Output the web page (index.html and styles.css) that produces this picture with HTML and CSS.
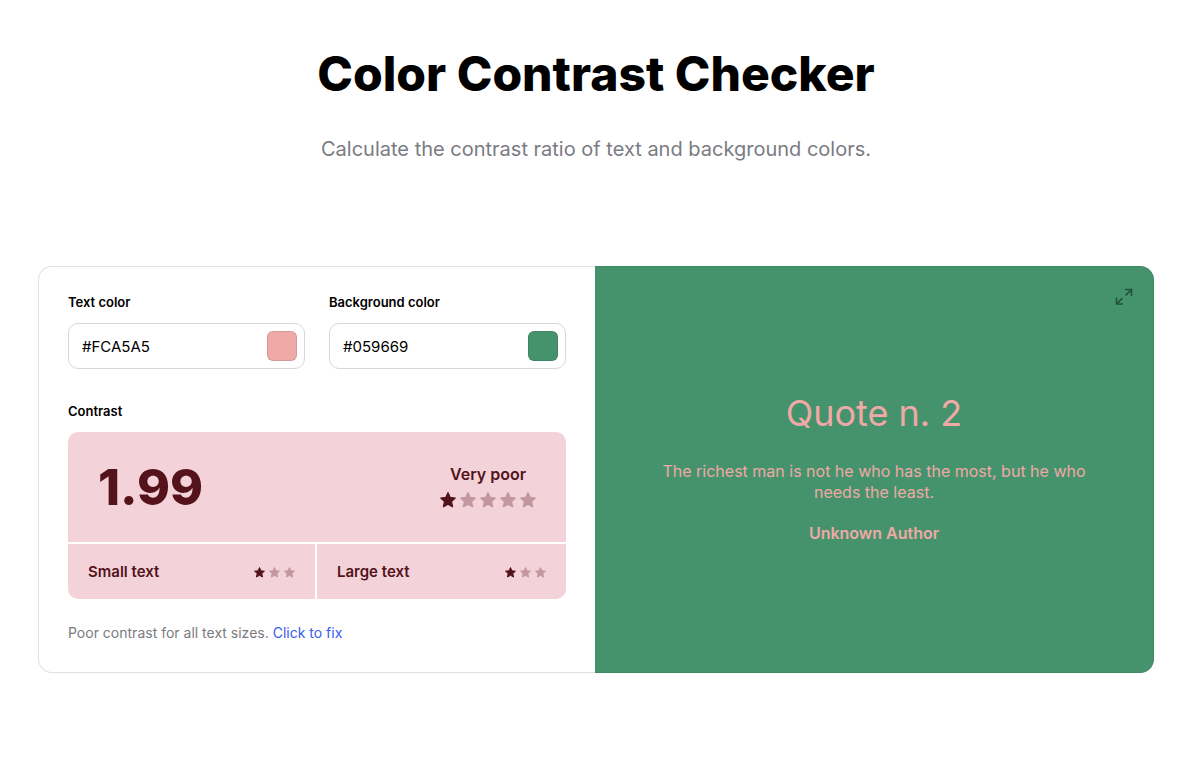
FILE: index.html
```html
<!DOCTYPE html>
<html lang="en">
<head>
<meta charset="utf-8">
<meta name="viewport" content="width=device-width, initial-scale=1">
<title>Color Contrast Checker</title>
<link rel="stylesheet" href="styles.css">
</head>
<body>
<svg class="sprite" aria-hidden="true">
  <symbol id="star" viewBox="0 0 16 16">
    <path d="M8 .8 10.1 5.5 15.2 6.1 11.4 9.5 12.5 14.6 8 12.1 3.5 14.6 4.6 9.5 .8 6.1 5.9 5.5Z" fill="currentColor" stroke="currentColor" stroke-width="1.4" stroke-linejoin="round"/>
  </symbol>
</svg>
<main class="page">
  <header class="intro">
    <h1 class="title">Color Contrast Checker</h1>
    <p class="subtitle">Calculate the contrast ratio of text and background colors.</p>
  </header>
  <section class="checker">
    <form class="controls">
      <div class="fields">
        <div class="field">
          <label class="label" for="text-color">Text color</label>
          <div class="color-input">
            <input class="color-value" id="text-color" type="text" value="#FCA5A5">
            <button class="swatch swatch-text" type="button" aria-label="Pick text color"></button>
          </div>
        </div>
        <div class="field">
          <label class="label" for="background-color">Background color</label>
          <div class="color-input">
            <input class="color-value" id="background-color" type="text" value="#059669">
            <button class="swatch swatch-background" type="button" aria-label="Pick background color"></button>
          </div>
        </div>
      </div>
      <h2 class="label contrast-label">Contrast</h2>
      <div class="results">
        <div class="overall">
          <strong class="ratio">1.99</strong>
          <div class="verdict">
            <span class="verdict-text">Very poor</span>
            <div class="stars">
              <svg class="star"><use href="#star"/></svg>
              <svg class="star star-off"><use href="#star"/></svg>
              <svg class="star star-off"><use href="#star"/></svg>
              <svg class="star star-off"><use href="#star"/></svg>
              <svg class="star star-off"><use href="#star"/></svg>
            </div>
          </div>
        </div>
        <div class="size-result">
          <span>Small text</span>
          <div class="stars stars-small">
            <svg class="star"><use href="#star"/></svg>
            <svg class="star star-off"><use href="#star"/></svg>
            <svg class="star star-off"><use href="#star"/></svg>
          </div>
        </div>
        <div class="size-result">
          <span>Large text</span>
          <div class="stars stars-small">
            <svg class="star"><use href="#star"/></svg>
            <svg class="star star-off"><use href="#star"/></svg>
            <svg class="star star-off"><use href="#star"/></svg>
          </div>
        </div>
      </div>
      <p class="note">Poor contrast for all text sizes. <a class="fix" href="#fix">Click to fix</a></p>
    </form>
    <article class="preview">
      <button class="expand" type="button" aria-label="Expand preview">
        <svg class="expand-icon" viewBox="0 0 18 18" fill="none" stroke="currentColor" stroke-width="1.6">
          <path d="M10 1.5H16.5V8M16.5 1.5 10.6 7.4M1.5 9.5V16H8M1.5 16 7.4 10.1"/>
        </svg>
      </button>
      <h2 class="quote-title">Quote n. 2</h2>
      <p class="quote">The richest man is not he who has the most, but he who needs the least.</p>
      <p class="author">Unknown Author</p>
    </article>
  </section>
</main>
</body>
</html>
```
FILE: styles.css
```css
* {
  box-sizing: border-box;
}

body {
  margin: 0;
  background: #fff;
  color: #000;
  font-family: Inter, "Liberation Sans", sans-serif;
}

h1, h2, p {
  margin: 0;
}

button {
  padding: 0;
  border: 0;
  background: none;
  cursor: pointer;
}

.sprite {
  display: none;
}

.page {
  padding: 44px 38px 40px;
}

.intro {
  margin-bottom: 102px;
  text-align: center;
}

.title {
  font-size: 48px;
  line-height: 60px;
  font-weight: 800;
}

.subtitle {
  margin-top: 30px;
  font-size: 20px;
  line-height: 30px;
  color: #7b7b83;
}

.checker {
  display: grid;
  grid-template-columns: minmax(0, 557fr) minmax(0, 559fr);
}

.controls {
  padding: 25px 29px 29px;
  border: 1px solid #e1e1e3;
  border-right: 0;
  border-radius: 14px 0 0 14px;
}

.fields {
  display: grid;
  grid-template-columns: minmax(0, 1fr) minmax(0, 1fr);
  gap: 24px;
}

.label {
  display: block;
  margin-bottom: 11px;
  font-size: 13px;
  line-height: 20px;
  font-weight: 600;
}

.color-input {
  display: flex;
  align-items: center;
  height: 46px;
  padding: 0 7px 0 13px;
  border: 1px solid #d8d8da;
  border-radius: 10px;
}

.color-value {
  flex: 1;
  min-width: 0;
  padding: 2px 0 0;
  border: 0;
  outline: 0;
  background: none;
  color: #000;
  font: 15px/20px Inter, "Liberation Sans", sans-serif;
}

.swatch {
  width: 30px;
  height: 30px;
  border: 1px solid rgba(0, 0, 0, 0.1);
  border-radius: 6px;
}

.swatch-text {
  background: #efa9a6;
}

.swatch-background {
  background: #45936c;
}

.contrast-label {
  margin-top: 32px;
}

.results {
  display: grid;
  grid-template-columns: minmax(0, 247fr) minmax(0, 249fr);
  gap: 2px;
  overflow: hidden;
  border-radius: 10px;
  color: #54131a;
}

.overall {
  grid-column: 1 / -1;
  display: flex;
  align-items: center;
  justify-content: space-between;
  height: 110px;
  padding: 0 30px;
  background: #f3d2d9;
}

.ratio {
  font-size: 50px;
  line-height: 60px;
  font-weight: 800;
}

.verdict {
  display: flex;
  flex-direction: column;
  align-items: center;
  gap: 8px;
  padding-bottom: 2px;
  font-size: 16px;
  line-height: 20px;
  font-weight: 600;
}

.stars {
  display: flex;
  gap: 4px;
}

.star {
  display: block;
  width: 16px;
  height: 16px;
}

.star-off {
  opacity: 0.3;
}

.stars-small {
  padding-top: 2px;
}

.stars-small .star {
  width: 11px;
  height: 11px;
}

.size-result {
  display: flex;
  align-items: center;
  justify-content: space-between;
  height: 55px;
  padding: 0 20px;
  background: #f3d2d9;
  font-size: 15px;
  line-height: 20px;
  font-weight: 600;
}

.note {
  margin-top: 24px;
  font-size: 14px;
  line-height: 20px;
  color: #7b7b7e;
}

.fix {
  color: #3a5af0;
  text-decoration: none;
}

.preview {
  position: relative;
  display: flex;
  flex-direction: column;
  align-items: center;
  justify-content: center;
  padding: 0 60px 6px;
  border: 1px solid #3e8a63;
  border-left: 0;
  border-radius: 0 14px 14px 0;
  background: #45936c;
  color: #efa9a6;
  text-align: center;
}

.expand {
  position: absolute;
  top: 21px;
  right: 20px;
  color: #22523a;
}

.expand-icon {
  display: block;
  width: 18px;
  height: 18px;
}

.quote-title {
  font-size: 36px;
  line-height: 44px;
  font-weight: 400;
}

.quote {
  margin-top: 26px;
  font-size: 16px;
  line-height: 21px;
}

.author {
  margin-top: 20px;
  font-size: 16px;
  line-height: 20px;
  font-weight: 600;
}
```
